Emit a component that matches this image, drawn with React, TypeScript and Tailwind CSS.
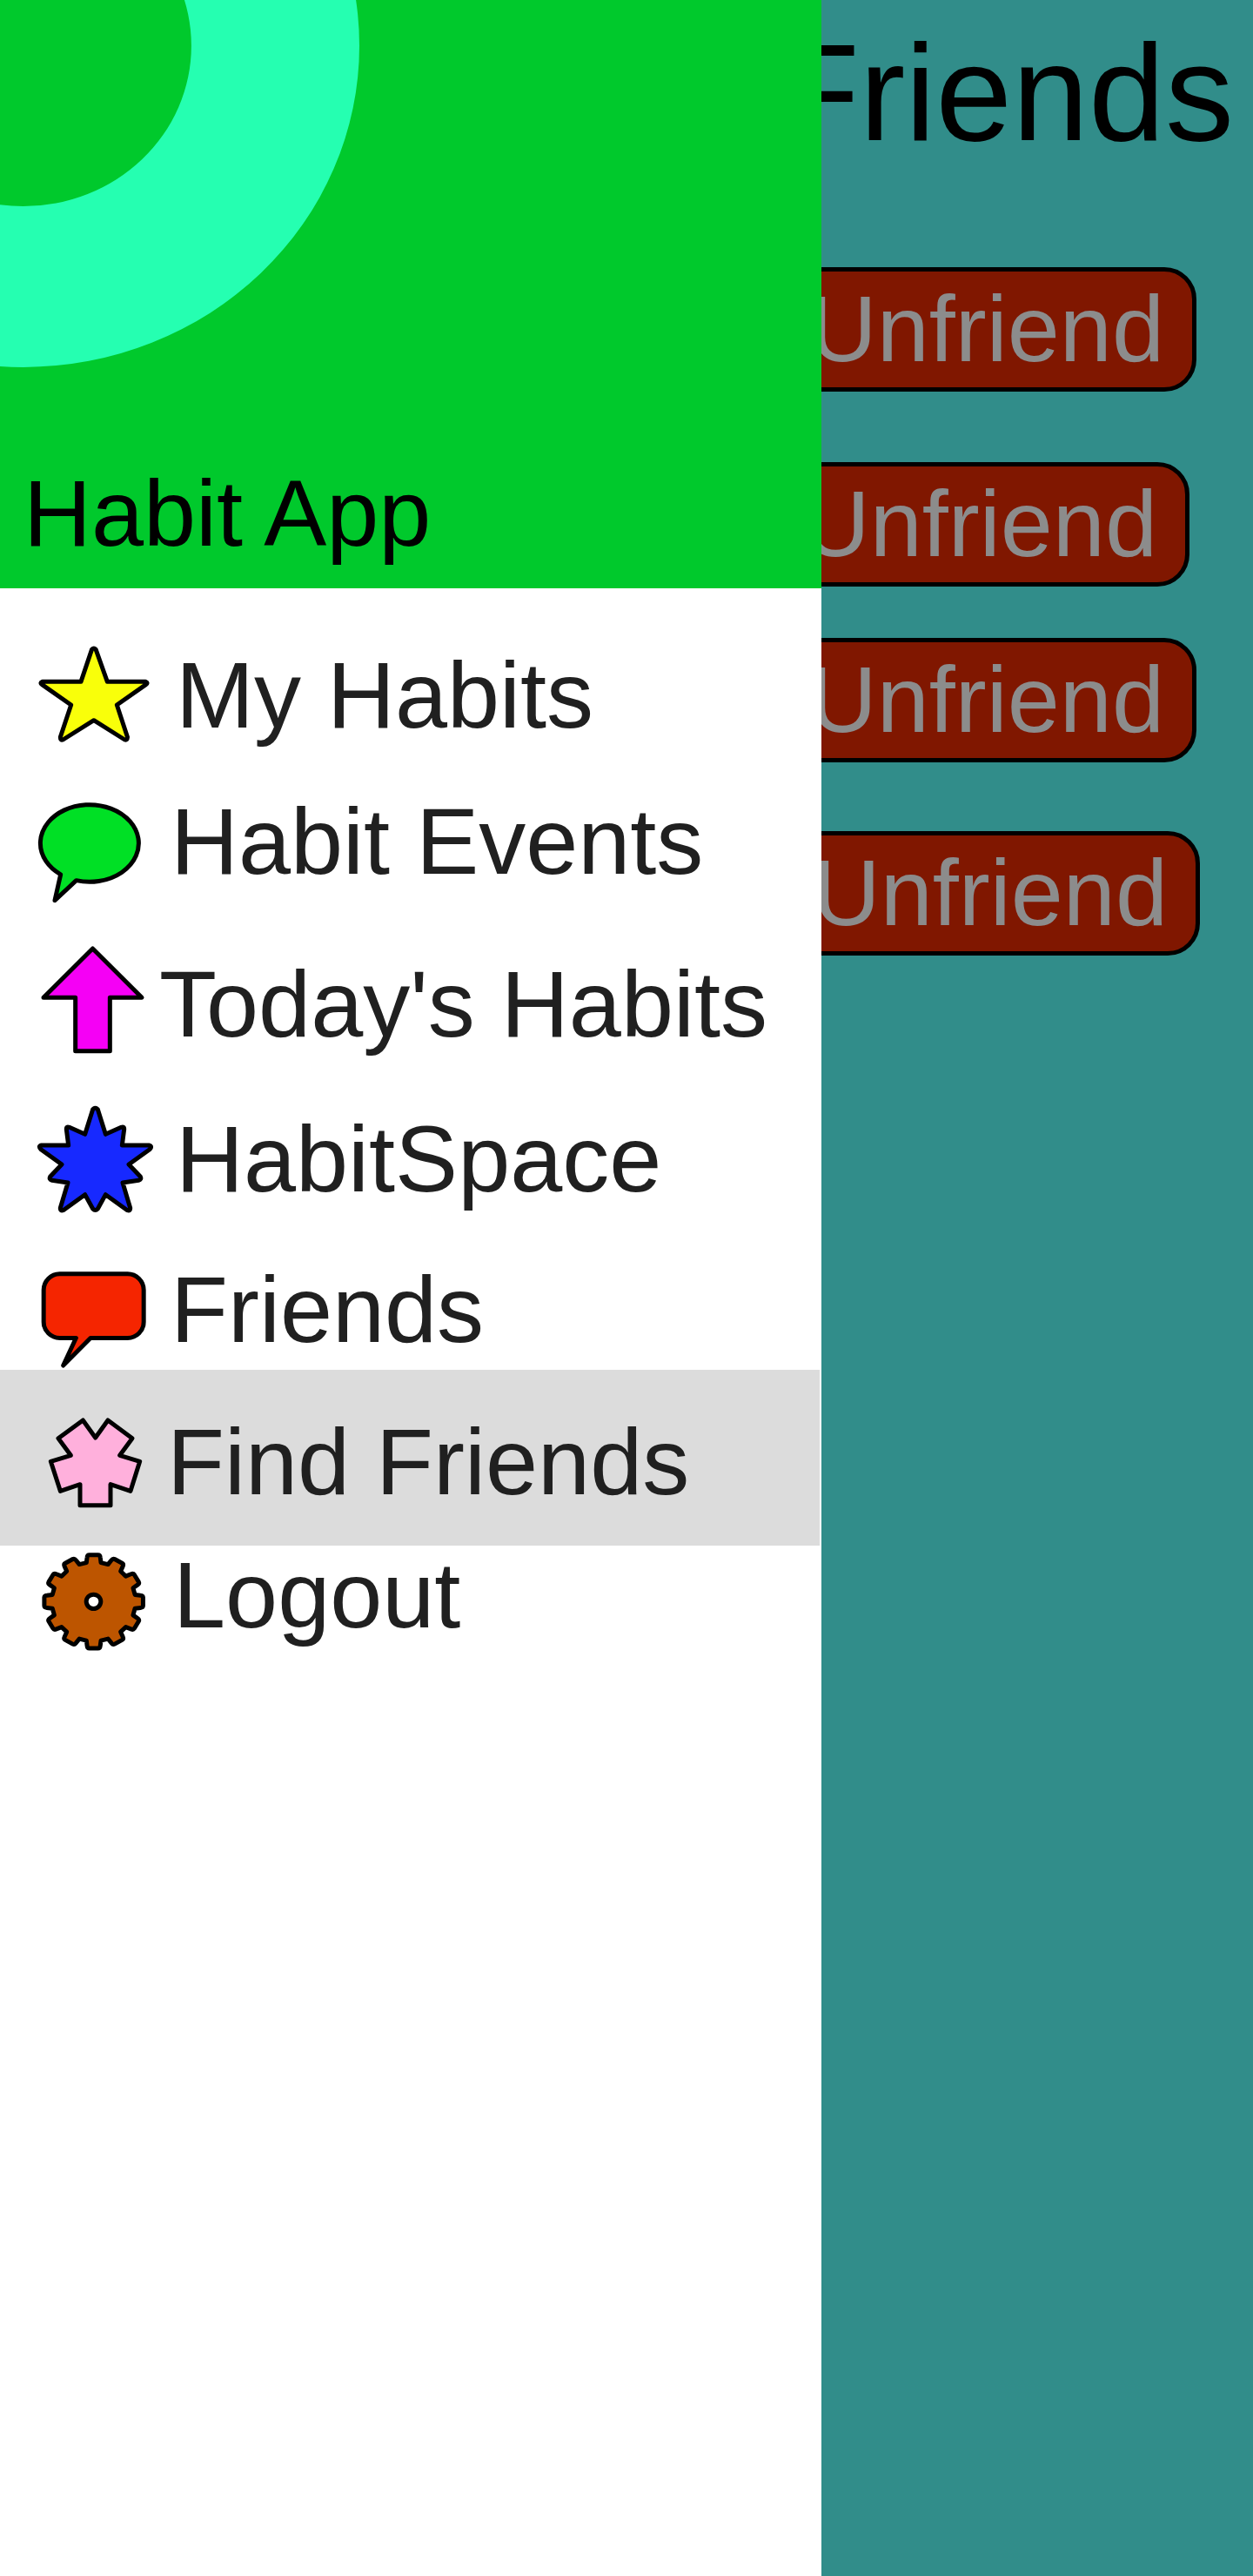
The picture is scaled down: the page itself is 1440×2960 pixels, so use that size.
import type { ReactNode } from "react";

function Icon({ box, className, children }: { box: string; className: string; children: ReactNode }) {
  return (
    <svg
      viewBox={box}
      className={`ml-10 w-[136px] shrink-0 ${className}`}
      stroke="#000"
      strokeWidth={15}
      strokeLinejoin="round"
      strokeLinecap="round"
    >
      {children}
    </svg>
  );
}

// Twelve-tooth cog outline, slightly wider than tall.
function cogPath() {
  const at = (deg: number, r: number) => {
    const a = (deg * Math.PI) / 180;
    return `${(323 + r * Math.sin(a)).toFixed(1)} ${(301 - r * 0.944 * Math.cos(a)).toFixed(1)}`;
  };
  let d = "";
  for (let k = 0; k < 12; k++) {
    const c = k * 30;
    d += `${k ? "L" : "M"}${at(c - 10, 144.5)}L${at(c - 8, 163)}Q${at(c - 7.3, 171.5)} ${at(c - 5, 171)}`;
    d += `L${at(c + 5, 171)}Q${at(c + 7.3, 171.5)} ${at(c + 8, 163)}L${at(c + 10, 144.5)}`;
  }
  return d + "Z";
}

const items = [
  {
    label: "My Habits",
    row: "h-[224px]",
    text: "ml-[26px] mt-[69px]",
    icon: (
      <Icon box="120 60 408 345" className="mt-[64px] h-[115px]">
        <path fill="#f9ff0a" d="M316.500 79Q323.500 72 330.500 79L370 190H502Q512 194 503 200L403 270L439.500 381Q439 393 430 390L323.500 323L217 390Q208 393 208 381L245 270L145 200Q136 194 146 190H279Z" />
      </Icon>
    ),
  },
  {
    label: "Habit Events",
    row: "h-[172px]",
    text: "ml-[20px] mt-[13px]",
    icon: (
      <Icon box="120 594 408 366" className="mt-[18px] h-[122px]">
        <path fill="#00e025" d="M209 854.500L189 944L263 875A169.500 133 0 1 0 209 854.500Z" />
      </Icon>
    ),
  },
  {
    label: "Today's Habits",
    row: "h-[184px]",
    text: "ml-[7px] mt-[28px]",
    icon: (
      <Icon box="120 75 408 384" className="mt-[13px] h-[128px]">
        <path fill="#f500f5" d="M319.500 90L489 259H379V443H260V259H150Z" />
      </Icon>
    ),
  },
  {
    label: "HabitSpace",
    row: "h-[184px]",
    text: "ml-[26px] mt-[22px]",
    icon: (
      <Icon box="120 621 408 387" className="mt-[11px] h-[129px]">
        <path
          fill="#1729ff"
          d="M320 644Q328.500 635 337 644L364 730L418 706Q429 702 428 713L421 768H514Q527 771 516 782L444 834L484 876Q489 886 478 889L423 897L449 984Q450 995 439 992L364 938L337 987Q328.500 996 320 987L293 938L218 992Q207 995 208 984L234 897L179 889Q168 886 173 876L213 834L141 782Q130 771 143 768H236L229 713Q228 702 239 706L293 730Z"
        />
      </Icon>
    ),
  },
  {
    label: "Friends",
    row: "h-[134px]",
    text: "ml-[20px] mt-[11px]",
    icon: (
      <Icon box="120 84 408 348" className="mt-[18px] h-[116px]">
        <path
          fill="#f52500"
          d="M206 101.500H440A55.500 55.500 0 0 1 495.500 157V267A55.500 55.500 0 0 1 440 322.500H312L218 417L262 322.500H206A55.500 55.500 0 0 1 150.500 267V157A55.500 55.500 0 0 1 206 101.500Z"
        />
      </Icon>
    ),
  },
  {
    label: "Find Friends",
    row: "h-[202px] w-[942px] bg-[#dcdcdc]",
    text: "ml-[16px] mt-[52px]",
    icon: (
      <Icon box="120 591 408 324" className="mt-[53px] h-[108px]">
        <path
          fill="#ffb0dc"
          d="M286 606L329 666L372 606L456 668L413 727L482 748L450 850L381 827V899H276V827L208 850L175 748L244 727L201 668Z"
        />
      </Icon>
    ),
  },
  {
    label: "Logout",
    row: "h-[130px]",
    text: "ml-[23px] mt-[3px]",
    icon: (
      <Icon box="120 120 408 360" className="mt-[4px] h-[120px]">
        <path fill="#bd5500" d={cogPath()} />
        <ellipse cx="322.500" cy="301" rx="25" ry="24.500" fill="#fff" />
      </Icon>
    ),
  },
];

const buttons = ["mt-[119px] mr-[65px]", "mt-[81px] mr-[73px]", "mt-[59px] mr-[65px]", "mt-[79px] mr-[61px]"];

export default function App() {
  return (
    <div className="flex h-[2960px] w-[1440px] overflow-hidden bg-[#318d8a] font-['Liberation_Sans',Arial,sans-serif]">
      <aside className="w-[944px] shrink-0 bg-white">
        <header className="relative flex h-[676px] items-end overflow-hidden bg-[#00c92c]">
          <svg viewBox="0 0 944 676" className="absolute inset-0 h-full w-full">
            <path
              fill="#25ffb1"
              fillRule="evenodd"
              d="M-359.600 52.500a386.300 369.400 0 1 0 772.600 0a386.300 369.400 0 1 0 -772.600 0ZM-166.500 52.500a193.200 184.600 0 1 0 386.400 0a193.200 184.600 0 1 0 -386.400 0Z"
            />
          </svg>
          <h1 className="relative mb-[32px] ml-[27px] whitespace-nowrap text-[108px] leading-none text-black">Habit App</h1>
        </header>
        <nav>
          {items.map((it) => (
            <a key={it.label} className={`flex items-start ${it.row}`}>
              {it.icon}
              <span className={`whitespace-nowrap text-[108px] leading-none text-[#202020] ${it.text}`}>{it.label}</span>
            </a>
          ))}
        </nav>
      </aside>
      <main className="flex w-[496px] flex-col items-end overflow-hidden">
        <h2 className="mr-[22px] mt-[27px] h-[161px] whitespace-nowrap text-[158px] leading-none text-black">Friends</h2>
        {buttons.map((pos, i) => (
          <button
            key={i}
            className={`flex h-[143px] w-[520px] shrink-0 items-start justify-end rounded-[37px] border-[5px] border-black bg-[#801700] pr-[32px] pt-[12px] text-[108px] leading-none text-[#8c8c8c] ${pos}`}
          >
            Unfriend
          </button>
        ))}
      </main>
    </div>
  );
}
